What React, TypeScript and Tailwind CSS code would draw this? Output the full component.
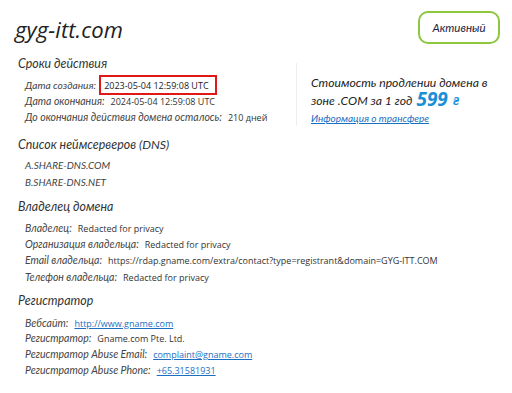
import React from "react";

const F = { fontFamily: '"Open Sans", "Noto Sans", sans-serif' };
const L = { fontFamily: 'Lato, "Open Sans", sans-serif' };

function Row({ label, children, h = "h-[16.3px]" }: { label: string; children: React.ReactNode; h?: string }) {
  return (
    <div className={"flex items-center leading-none whitespace-nowrap " + h}>
      <span className="italic text-[10.5px] text-[#444]" style={L}>{label}</span>
      <span className="ml-[6px] text-[9px] text-[#333]">{children}</span>
    </div>
  );
}

function Heading({ children }: { children: React.ReactNode }) {
  return (
    <div className="italic text-[12.4px] leading-none text-[#333] h-[20px] flex items-center" style={L}>
      {children}
    </div>
  );
}

export default function App() {
  return (
    <div className="w-[512px] h-[393px] bg-white overflow-hidden text-[#222]" style={F}>
      <div className="flex justify-between items-start pl-[15px] pr-[12px] pt-[11px]">
        <div className="italic text-[22px] leading-none mt-[7px] text-[#222] tracking-[0.1px]">gyg-itt.com</div>
        <div className="w-[82px] h-[33px] rounded-[10px] border-2 border-[#8dc63f] flex items-center justify-center italic text-[11.5px] text-[#1b2340]" style={L}>
          Активный
        </div>
      </div>

      <div className="flex pl-[18px] mt-[10px]">
        <div className="w-[278px]">
          <Heading>Сроки действия</Heading>
          <div className="pl-[7px] mt-[3px]">
            <div className="flex items-center h-[16px] leading-none whitespace-nowrap">
              <span className="italic text-[10.2px] text-[#444]" style={L}>Дата создания:</span>
              <span className="ml-[3px] border-2 border-[#e01818] pl-[3px] h-[20px] w-[118px] flex items-center text-[9px] text-[#222]">2023-05-04 12:59:08 UTC</span>
            </div>
            <Row label="Дата окончания:" h="h-[16px]">2024-05-04 12:59:08 UTC</Row>
            <Row label="До окончания действия домена осталось:" h="h-[17px]">210 дней</Row>
          </div>
        </div>
        <div className="border-l border-[#eeeeee] pl-[14px] mt-[9px] h-[63px] flex flex-col" style={L}>
          <div className="italic text-[12.2px] leading-none text-[#222] h-[17px] flex items-center mt-[12px] whitespace-nowrap">Стоимость продлении домена в</div>
          <div className="italic text-[12.2px] leading-none text-[#222] h-[19px] flex items-end whitespace-nowrap">
            <span className="mb-[3px]">зоне .COM за 1 год</span>
            <span className="ml-[4px] font-bold text-[19px] text-[#1a8fd6] leading-none mb-[1px]" style={F}>599</span>
            <span className="ml-[5px] text-[12px] text-[#1a8fd6] font-bold mb-[3px]">₴</span>
          </div>
          <div className="italic text-[10px] leading-none text-[#1a6fc2] underline h-[16px] flex items-center">Информация о трансфере</div>
        </div>
      </div>

      <div className="pl-[18px] mt-[9px]">
        <Heading>Список неймсерверов (DNS)</Heading>
        <div className="pl-[7px] mt-[2px] italic text-[10px] text-[#444]" style={L}>
          <div className="h-[17px] flex items-center">A.SHARE-DNS.COM</div>
          <div className="h-[16px] flex items-center">B.SHARE-DNS.NET</div>
        </div>
      </div>

      <div className="pl-[18px] mt-[7px]">
        <Heading>Владелец домена</Heading>
        <div className="pl-[7px] mt-[3px]">
          <Row label="Владелец:">Redacted for privacy</Row>
          <Row label="Организация владельца:">Redacted for privacy</Row>
          <Row label="Email владельца:">https://rdap.gname.com/extra/contact?type=registrant&amp;domain=GYG-ITT.COM</Row>
          <Row label="Телефон владельца:">Redacted for privacy</Row>
        </div>
      </div>

      <div className="pl-[18px] mt-[6px]">
        <Heading>Регистратор</Heading>
        <div className="pl-[7px] mt-[4px]">
          <Row label="Вебсайт:" h="h-[15.7px]"><span className="text-[#1a6fc2] underline">http://www.gname.com</span></Row>
          <Row label="Регистратор:" h="h-[15.7px]">Gname.com Pte. Ltd.</Row>
          <Row label="Регистратор Abuse Email:" h="h-[15.7px]"><span className="text-[#1a6fc2] underline">complaint@gname.com</span></Row>
          <Row label="Регистратор Abuse Phone:" h="h-[15.7px]"><span className="text-[#1a6fc2] underline">+65.31581931</span></Row>
        </div>
      </div>
    </div>
  );
}
